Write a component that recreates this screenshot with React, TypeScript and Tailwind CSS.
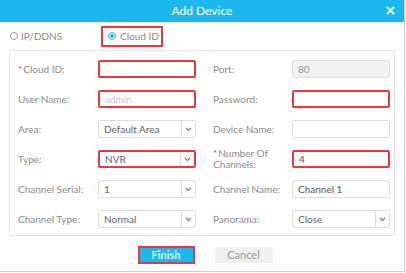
import { ReactNode } from "react";

const RED = "border-[#e8393f]";

function Label({ children, req, w }: { children: ReactNode; req?: boolean; w: string }) {
  return (
    <div className={`${w} shrink-0 leading-[11px] text-[#8a8a8a]`}>
      {req && <span className="text-[#e8393f] mr-[1px]">*</span>}
      {children}
    </div>
  );
}

function Input({
  value,
  placeholder,
  red,
  disabled,
}: {
  value?: string;
  placeholder?: string;
  red?: boolean;
  disabled?: boolean;
}) {
  return (
    <div
      className={`w-[98px] h-[18px] rounded-[2px] flex items-center px-[5px] ${
        red ? `border-2 ${RED}` : "border border-[#dedede]"
      } ${disabled ? "bg-[#f2f2f2] text-[#999]" : "bg-white text-[#555]"}`}
    >
      {value}
      {placeholder && <span className="text-[#c8c8c8]">{placeholder}</span>}
    </div>
  );
}

function Select({ value, red }: { value: string; red?: boolean }) {
  return (
    <div
      className={`w-[98px] h-[18px] rounded-[2px] flex items-center bg-white ${
        red ? `border-2 ${RED}` : "border border-[#dedede]"
      }`}
    >
      <span className="flex-1 px-[5px] text-[#666]">{value}</span>
      <span className="w-[14px] h-full border-l border-[#dedede] flex items-center justify-center">
        <svg width="7" height="5" viewBox="0 0 7 5">
          <path d="M1 1 L3.5 3.5 L6 1" fill="none" stroke="#777" strokeWidth="1.1" />
        </svg>
      </span>
    </div>
  );
}

function Row({ children }: { children: ReactNode }) {
  return <div className="flex items-center h-[18px]">{children}</div>;
}

const L = "w-[80px]";
const R = "w-[79px]";

export default function App() {
  return (
    <div
      className="w-[405px] h-[272px] bg-white border-r border-b border-[#cfcfcf] flex flex-col text-[10px]"
      style={{ fontFamily: "Lato, 'Open Sans', sans-serif" }}
    >
      <div className="h-[22px] bg-[#1cb7ee] relative flex items-center justify-center text-white text-[12px] font-medium">
        Add Device
        <span className="absolute right-[9px] top-[6px]">
          <svg width="9" height="9" viewBox="0 0 9 9">
            <path d="M1 1 L8 8 M8 1 L1 8" stroke="#fff" strokeWidth="1.8" />
          </svg>
        </span>
      </div>

      <div className="h-[28px] flex items-center text-[#8a8a8a] text-[10px] whitespace-nowrap">
        <div className="flex items-center pl-[10px] w-[101px]">
          <span className="w-[8px] h-[8px] rounded-full border border-[#999] mr-[3px]" />
          IP/DDNS
        </div>
        <div className={`flex items-center h-[21px] w-[62px] border-2 ${RED} pl-[5px]`}>
          <span className="w-[8px] h-[8px] rounded-full border border-[#1cb7ee] flex items-center justify-center mr-[4px]">
            <span className="w-[4px] h-[4px] rounded-full bg-[#1cb7ee]" />
          </span>
          Cloud ID
        </div>
      </div>

      <div className="mx-[9px] h-[186px] border border-[#e6e6e6] rounded-[2px] pt-[9px] pl-[8px]">
        <div className="grid grid-cols-[178px_177px] gap-x-[17px] gap-y-[12px]">
          <Row>
            <Label w={L} req>Cloud ID:</Label>
            <Input red />
          </Row>
          <Row>
            <Label w={R}>Port:</Label>
            <Input value="80" disabled />
          </Row>
          <Row>
            <Label w={L}>User Name:</Label>
            <Input placeholder="admin" red />
          </Row>
          <Row>
            <Label w={R}>Password:</Label>
            <Input red />
          </Row>
          <Row>
            <Label w={L}>Area:</Label>
            <Select value="Default Area" />
          </Row>
          <Row>
            <Label w={R}>Device Name:</Label>
            <Input />
          </Row>
          <Row>
            <Label w={L}>Type:</Label>
            <Select value="NVR" red />
          </Row>
          <Row>
            <Label w={R} req>
              Number Of
              <br />
              Channels:
            </Label>
            <Input value="4" red />
          </Row>
          <Row>
            <Label w={L}>Channel Serial:</Label>
            <Select value="1" />
          </Row>
          <Row>
            <Label w={R}>Channel Name:</Label>
            <Input value="Channel 1" />
          </Row>
          <Row>
            <Label w={L}>Channel Type:</Label>
            <Select value="Normal" />
          </Row>
          <Row>
            <Label w={R}>Panorama:</Label>
            <Select value="Close" />
          </Row>
        </div>
      </div>

      <div className="flex justify-center items-center gap-[20px] pt-[10px] pl-[6px]">
        <button className={`w-[57px] h-[18px] border-2 ${RED} bg-[#1cb7ee] text-white text-[11px] font-semibold flex items-center justify-center`}>
          Finish
        </button>
        <button className="w-[58px] h-[16px] bg-[#efefef] text-[#999] text-[11px] rounded-[2px] flex items-center justify-center">
          Cancel
        </button>
      </div>
    </div>
  );
}
